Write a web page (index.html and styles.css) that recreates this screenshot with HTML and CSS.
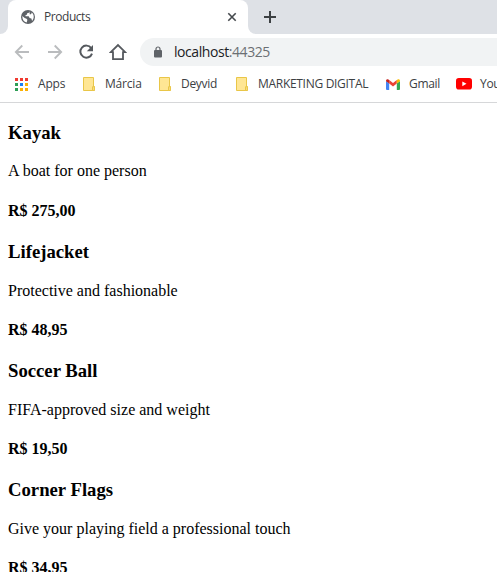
FILE: index.html
```html
<!DOCTYPE html>
<html lang="pt-BR">
<head>
<meta charset="utf-8">
<title>Products</title>
<link rel="stylesheet" href="styles.css">
</head>
<body>
<header class="browser">
  <div class="tabstrip">
    <div class="edge"><span></span></div>
    <div class="tab">
      <svg class="globe" width="14" height="14" viewBox="0 0 14 14"><circle cx="7" cy="7" r="7" fill="#5f6368"/><path d="M1.3 6.1 4 8.2 5.2 8.5 6.4 9.7 5.7 12.6C3 12 1.2 9.8 1.3 6.1ZM8.2 1.3 7.9 2.7 6.2 3.2 5.8 4.7 4.4 5.2 4.6 6.2 7.7 6.3 8.6 8 10.4 8.4 11.1 10.9C13.5 8.3 13.2 4.5 10.7 2.5L10.2 4 8.9 4.4 8.6 3.3Z" fill="#fff"/></svg>
      <span class="tab-title">Products</span>
      <svg class="close" width="10" height="10" viewBox="0 0 10 10"><path d="m1.3 1.3 7.4 7.4m0-7.4L1.3 8.7" stroke="#45494d" stroke-width="1.6"/></svg>
    </div>
    <div class="strip-rest">
      <svg width="12" height="12" viewBox="0 0 12 12"><path d="M6 0v12M0 6h12" stroke="#3c4043" stroke-width="2"/></svg>
    </div>
  </div>
  <div class="toolbar">
    <svg class="back" width="16" height="16" viewBox="0 0 16 16" fill="none" stroke="#babcbe" stroke-width="1.8"><path d="M15 8H2M8.3 1.5 1.8 8l6.5 6.5"/></svg>
    <svg class="forward" width="16" height="16" viewBox="0 0 16 16" fill="none" stroke="#babcbe" stroke-width="1.8"><path d="M1 8h13M7.7 1.5 14.2 8l-6.5 6.5"/></svg>
    <svg class="reload" width="16" height="16" viewBox="0 0 16 16"><path d="M13.2 4.1A6 6 0 1 0 14 9.6" fill="none" stroke="#55595e" stroke-width="2"/><path d="M15 1v6.2H8.8Z" fill="#55595e"/></svg>
    <svg class="home" width="18" height="18" viewBox="0 0 18 18"><path d="M1.8 9.2 9 2l7.2 7.2H14v6.9H4V9.2Z" fill="none" stroke="#55595e" stroke-width="1.8"/></svg>
    <div class="address">
      <svg width="8" height="12" viewBox="0 0 8 12"><path d="M2 5V3a2 2 0 0 1 4 0v2" fill="none" stroke="#5f6368" stroke-width="1.2"/><rect y="4" width="8" height="7.4" rx="1" fill="#5f6368"/></svg>
      <span class="url">localhost<span class="port">:44325</span></span>
    </div>
  </div>
  <nav class="bookmarks">
    <a class="bookmark apps"><svg width="13" height="13" viewBox="0 0 13 13"><path d="M0 0h3v3H0zM5 0h3v3H5zM10 0h3v3h-3z" fill="#f03a30"/><path d="M0 5h3v3H0zM0 10h3v3H0z" fill="#2e9e56"/><path d="M5 5h3v3H5z" fill="#1a80f5"/><path d="M10 5h3v3h-3zM10 10h3v3h-3zM5 10h3v3H5z" fill="#fbb104"/></svg><span>Apps</span></a>
    <a class="bookmark marcia"><svg width="12" height="14" viewBox="0 0 12 14"><path d="M.5.5h10v9h1v4H.5Z" fill="#ffe694" stroke="#e9c648"/><path d="M9.5 13.5v-3.8h1.7v3.8Z" fill="#ffe694" stroke="#e9c648"/></svg><span>Márcia</span></a>
    <a class="bookmark deyvid"><svg width="12" height="14" viewBox="0 0 12 14"><path d="M.5.5h10v9h1v4H.5Z" fill="#ffe694" stroke="#e9c648"/><path d="M9.5 13.5v-3.8h1.7v3.8Z" fill="#ffe694" stroke="#e9c648"/></svg><span>Deyvid</span></a>
    <a class="bookmark marketing"><svg width="12" height="14" viewBox="0 0 12 14"><path d="M.5.5h10v9h1v4H.5Z" fill="#ffe694" stroke="#e9c648"/><path d="M9.5 13.5v-3.8h1.7v3.8Z" fill="#ffe694" stroke="#e9c648"/></svg><span>MARKETING DIGITAL</span></a>
    <a class="bookmark gmail"><svg width="14" height="11" viewBox="0 0 14 11"><path d="M0 2v8q0 1 1 1h2.2V4.4Z" fill="#4285f4"/><path d="M14 2v8q0 1-1 1h-2.2V4.4Z" fill="#34a853"/><path d="M3.2 1.1 7 4l3.8-2.9v3.5L7 7.4 3.2 4.6Z" fill="#ea4335"/><path d="M0 2C0 .1 1.8-.4 3.2.9v3.7L0 2.2Z" fill="#c5221f"/><path d="M14 2c0-1.9-1.8-2.4-3.2-1.1v3.7L14 2.2Z" fill="#fbbc04"/></svg><span>Gmail</span></a>
    <a class="bookmark youtube"><svg width="16" height="12" viewBox="0 0 16 12"><rect width="16" height="11.5" rx="2.8" fill="#f00"/><path d="m6.3 3.4 4.2 2.4-4.2 2.4Z" fill="#fff"/></svg><span>YouTube</span></a>
  </nav>
</header>
<main>
  <section><h3>Kayak</h3><p>A boat for one person</p><h4>R$ 275,00</h4></section>
  <section><h3>Lifejacket</h3><p>Protective and fashionable</p><h4>R$ 48,95</h4></section>
  <section><h3>Soccer Ball</h3><p>FIFA-approved size and weight</p><h4>R$ 19,50</h4></section>
  <section><h3>Corner Flags</h3><p>Give your playing field a professional touch</p><h4>R$ 34,95</h4></section>
</main>
</body>
</html>
```
FILE: styles.css
```css
* { box-sizing: border-box; }
html, body { height: 100%; }
body { margin: 0; overflow: hidden; background: #fff; color: #000; font: 16px/18px "Liberation Serif", serif; }
svg { display: block; flex: none; }
.browser { height: 103px; border-bottom: 1px solid #d6d7d9; font-family: "Open Sans", sans-serif; color: #3c4043; }
.tabstrip { display: flex; height: 34px; background: #fff; }
.edge { width: 8px; background: #fff; }
.edge span { display: block; height: 34px; background: #dee1e6; border-bottom-right-radius: 8px; }
.tab { display: flex; align-items: center; width: 240px; padding: 0 11px 0 13px; background: linear-gradient(#dee1e6, #dee1e6) top / 100% 8px no-repeat; position: relative; z-index: 0; }
.tab::before { content: ""; position: absolute; inset: 0; z-index: -1; border-radius: 8px 8px 0 0; background: #fff; }
.tab-title { margin-left: 9px; flex: 1; font-size: 12px; letter-spacing: -.45px; }
.strip-rest { flex: 1; display: flex; align-items: center; padding-left: 16px; background: #dee1e6; border-bottom-left-radius: 8px; }
.toolbar { display: flex; align-items: center; height: 35px; padding-left: 14px; }
.forward { margin-left: 17px; }
.reload { margin-left: 15px; }
.home { margin-left: 15px; }
.address { display: flex; align-items: center; flex: 1; height: 28px; margin-left: 13px; padding-left: 14px; background: #f1f3f4; border-radius: 14px 0 0 14px; }
.url { margin-left: 12px; font-size: 14px; letter-spacing: -.43px; white-space: nowrap; color: #202124; }
.port { color: #6b6f73; }
.bookmarks { display: flex; align-items: center; height: 30px; padding-left: 15px; overflow: hidden; font-size: 12px; }
.bookmark { display: flex; align-items: center; flex: none; white-space: nowrap; }
.apps { width: 68px; gap: 10px; letter-spacing: -.2px; }
.marcia { width: 76px; gap: 10px; letter-spacing: -.2px; }
.deyvid { width: 77px; gap: 10px; letter-spacing: -.3px; }
.marketing { width: 150px; gap: 10px; letter-spacing: -.3px; }
.gmail { width: 70px; gap: 9px; letter-spacing: -.3px; }
.youtube { gap: 8px; letter-spacing: -.3px; }
main { padding: 0 8px; }
h3 { margin: 18.72px 0; font-size: 18.72px; line-height: 22px; }
p { margin: 16px 0; }
h4 { margin: 21.28px 0; font-size: 16px; }
```
